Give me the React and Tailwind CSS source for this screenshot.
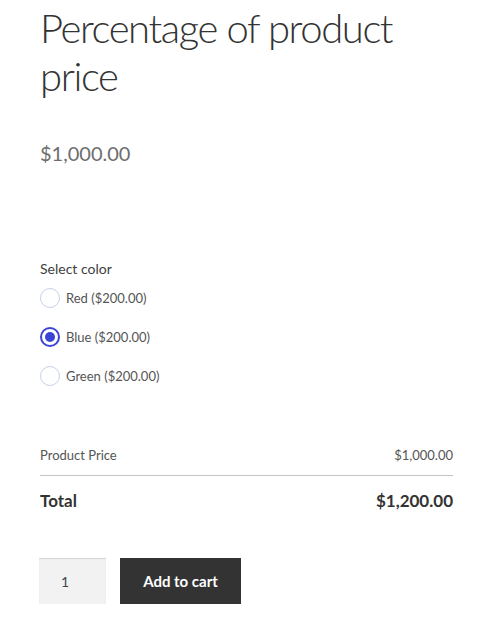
import { useState } from 'react';

const options = [
    { id: 'red', label: 'Red ($200.00)' },
    { id: 'blue', label: 'Blue ($200.00)' },
    { id: 'green', label: 'Green ($200.00)' },
];

const App = () => {
    const [color, setColor] = useState('blue');
    const [qty, setQty] = useState(1);

    return (
        <div className="min-h-screen bg-white text-[#333] px-[40px] pt-[4px] font-['Lato','Liberation_Sans',sans-serif]">
            <h1 className="text-[40px] leading-[48px] font-light text-[#333] tracking-[-1.4px]">
                Percentage of product price
            </h1>

            <p className="mt-[38px] text-[20px] leading-[30px] text-[#6d6d6d]">$1,000.00</p>

            <div className="mt-[91px]">
                <p className="text-[14px] leading-[20px] text-[#404040]">Select color</p>
                <div className="mt-[9px] flex flex-col gap-[19px]">
                    {options.map((opt) => (
                        <label key={opt.id} className="flex items-center gap-[6px] cursor-pointer">
                            <span
                                onClick={() => setColor(opt.id)}
                                className={`w-[20px] h-[20px] rounded-full bg-white flex items-center justify-center ${color === opt.id
                                        ? 'border-2 border-[#3c44d6]'
                                        : 'border border-[#c5d2e8]'
                                    }`}
                            >
                                {color === opt.id && <span className="w-[10px] h-[10px] rounded-full bg-[#3c44d6]" />}
                            </span>
                            <span className="text-[13px] leading-[20px] text-[#555]">{opt.label}</span>
                        </label>
                    ))}
                </div>
            </div>

            <div className="mt-[59px] w-[413px]">
                <div className="flex justify-between text-[13px] leading-[20px] text-[#555] pb-[10px] border-b border-[#c4c4c4]">
                    <span>Product Price</span>
                    <span>$1,000.00</span>
                </div>
                <div className="flex justify-between pt-[13px] text-[17px] leading-[24px] font-bold text-[#333]">
                    <span>Total</span>
                    <span>$1,200.00</span>
                </div>
            </div>

            <div className="mt-[45px] flex gap-[14px] ml-[-1px]">
                <input
                    type="number"
                    value={qty}
                    onChange={(e) => setQty(e.target.value)}
                    className="w-[67px] h-[46px] bg-[#f2f2f2] text-[14px] text-[#43454b] pl-[22px] outline-none shadow-[inset_0_1px_1px_rgba(0,0,0,0.125)] [appearance:textfield] [&::-webkit-inner-spin-button]:appearance-none"
                />
                <button className="w-[121px] h-[46px] bg-[#333] text-white font-bold text-[15px]">
                    Add to cart
                </button>
            </div>
        </div>
    );
};

export default App;
